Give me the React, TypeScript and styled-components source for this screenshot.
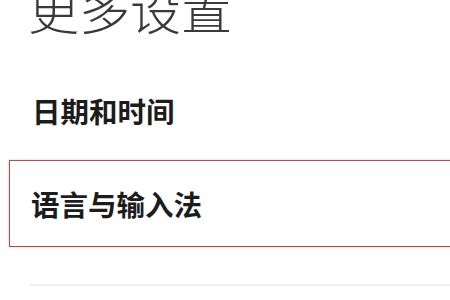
import React from "react";
import styled, { createGlobalStyle } from "styled-components";

const Global = createGlobalStyle`
  html, body { margin: 0; padding: 0; background: #ffffff; overflow: hidden; }
  body { font-family: "Noto Sans CJK SC", "Noto Sans", sans-serif; }
`;

const Page = styled.div`
  width: 450px;
  height: 300px;
  overflow: hidden;
  display: flex;
  flex-direction: column;
`;

const Title = styled.h1`
  margin: -17px 0 0 0;
  padding-left: 28px;
  font-size: 51px;
  line-height: 51px;
  font-weight: 300;
  color: #3a3a3a;
  white-space: nowrap;
`;

const Row = styled.div<{ $highlight?: boolean }>`
  display: flex;
  align-items: center;
  height: ${(p) => (p.$highlight ? "85px" : "88px")};
  margin-left: ${(p) => (p.$highlight ? "9px" : "0")};
  margin-right: ${(p) => (p.$highlight ? "-40px" : "0")};
  padding-left: ${(p) => (p.$highlight ? "21px" : "32px")};
  border: ${(p) => (p.$highlight ? "1.5px solid #a8504c" : "none")};
  box-shadow: ${(p) => (p.$highlight ? "0 0 2px rgba(220,120,120,0.5)" : "none")};
  font-size: 28.5px;
  font-weight: 700;
  color: #1c1c1c;
  white-space: nowrap;
`;

const Spacer = styled.div<{ $h: number }>`
  height: ${(p) => p.$h}px;
  flex-shrink: 0;
`;

const Divider = styled.div`
  margin-left: 30px;
  height: 2px;
  background: #efefef;
`;

export default function App() {
  return (
    <Page>
      <Global />
      <Title>更多设置</Title>
      <Spacer $h={32} />
      <Row>日期和时间</Row>
      <Spacer $h={6} />
      <Row $highlight>语言与输入法</Row>
      <Spacer $h={37} />
      <Divider />
    </Page>
  );
}
